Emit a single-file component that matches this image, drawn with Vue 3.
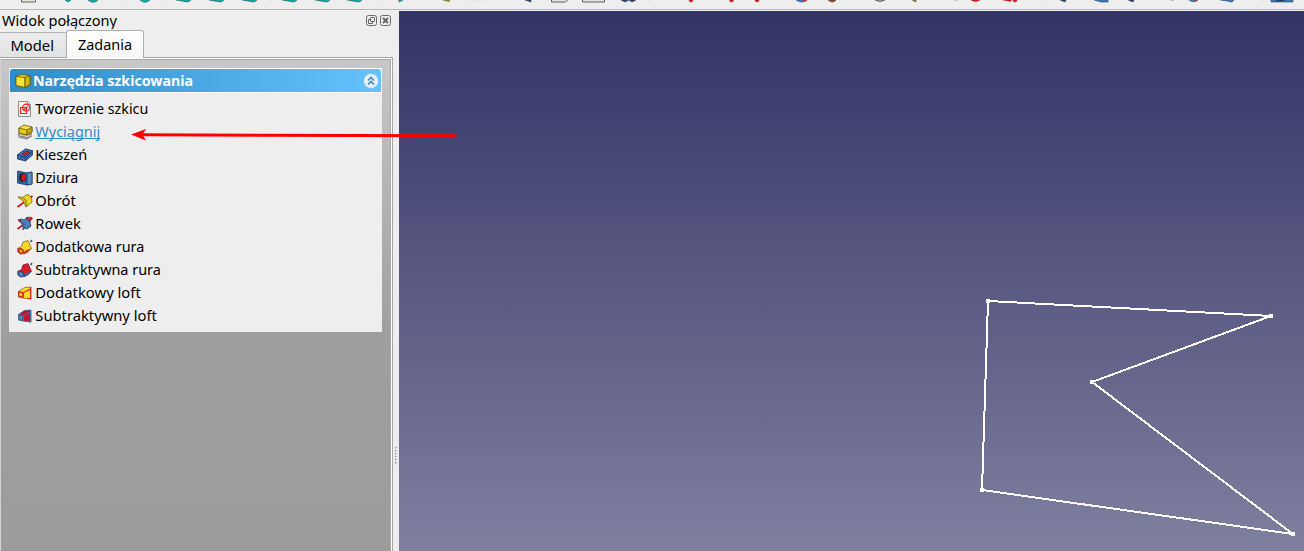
<script setup>
const slabs = [176, 209, 242, 282, 315, 347]
const separators = [125, 166, 271, 377, 648, 1046, 1263]
const tasks = [
  { label: 'Tworzenie szkicu', icon: 'sketch', width: 113 },
  { label: 'Wyciągnij', icon: 'pad', width: 65, active: true },
  { label: 'Kieszeń', icon: 'pocket', width: 52 },
  { label: 'Dziura', icon: 'hole', width: 43 },
  { label: 'Obrót', icon: 'revolve', width: 40.5 },
  { label: 'Rowek', icon: 'groove', width: 45.5 },
  { label: 'Dodatkowa rura', icon: 'addpipe', width: 109 },
  { label: 'Subtraktywna rura', icon: 'subpipe', width: 125.5 },
  { label: 'Dodatkowy loft', icon: 'addloft', width: 105.5 },
  { label: 'Subtraktywny loft', icon: 'subloft', width: 121.5 },
]
const vertices = [[988, 301], [1271, 316], [1092, 382], [1293, 534], [982, 490]]
const outline = vertices.map(([x, y]) => `${x - 399},${y - 11}`).join(' ')
</script>

<template>
  <div class="window">
    <header class="toolbar">
      <svg width="1304" height="9" viewBox="0 0 1304 9">
        <path v-for="x in separators" :key="x" :d="`M${x + .5} 0v1`" stroke="#cfcfcf" />
        <path d="M21.5 0v2h14v-2" fill="#e2e5dc" stroke="#676b65" />
        <g fill="#12a9a9" stroke="#245c5e" stroke-width=".7">
          <path d="M65 0l3 2 3-2M88 0q5 4.500 10 0M140 0q5 4.500 10 0M399 0v2l4-2" />
          <path v-for="x in slabs" :key="x" :d="`M${x} 0l12 2 3-2`" />
        </g>
        <path d="M443 0l6 1.500 1-1.500" fill="#ad9410" stroke="#554b24" stroke-width=".6" />
        <path d="M470 0h17" stroke="#e0e0e0" />
        <g fill="#25416f" stroke="#2c3544" stroke-width=".6">
          <path d="M525 0l6 2v-2M621 0l4 2 4-2 3 2 4-2M1060 0l5 2 1-2M1128 0l5 2 1-2" />
        </g>
        <path d="M551.500 0v2h14l2-2M582.500 0v2h22v-2" fill="#e3e3dc" stroke="#5e625d" />
        <g fill="#d61c1c" stroke="#842424" stroke-width=".5">
          <circle v-for="x in [691, 731.5, 757, 1015]" :key="x" :cx="x" cy="0" r="2" />
          <path d="M971 0q5 3 9 0M954 0h3M1003 0l7 1.500 2-1.500" />
        </g>
        <g fill="#3c78b8" stroke="#263e60" stroke-width=".6">
          <path d="M796 0q6 4 11 0M1094 0l7 2h7v-2M1189 0q5 3.500 9 0M1171 0h3M1220 0l7 1 5 1 2-2" />
          <path d="M1271 0v2h22v-2" />
        </g>
        <path d="M803 0q2 3 4 0M1193 0l4 1v-1" fill="#e22119" />
        <path d="M828 0q5 4 8 0" fill="#8a481c" stroke="#41301f" stroke-width=".6" />
        <path d="M875 0q5 3 10 0" fill="#a7aaaa" stroke="#5b5d5d" />
        <path d="M912 0l4 2v-2" fill="#958327" stroke="#56501e" stroke-width=".6" />
        <path d="M1276 0l3 1 6-1" stroke="#203042" fill="none" />
      </svg>
    </header>

    <main class="workspace">
      <aside class="dock">
        <div class="title">
          <svg class="label" width="118" height="18"><text x="2" y="14.5" textLength="115" lengthAdjust="spacingAndGlyphs">Widok połączony</text></svg>
          <svg class="controls" width="26" height="12" viewBox="0 0 26 12" fill="none" stroke="#686762">
            <rect x=".5" y=".5" width="10" height="10" rx="2" />
            <rect x="4.500" y="2.500" width="4" height="4" rx=".5" />
            <path d="M4.500 4.500h-2v4h4v-2" />
            <rect x="14.500" y=".5" width="10" height="10" rx="2" />
            <path d="M17 3l5 5M22 3l-5 5" stroke-width="2" />
          </svg>
        </div>
        <nav class="tabs">
          <div class="tab"><svg width="66" height="24"><text x="10.500" y="17.5" textLength="43.500" lengthAdjust="spacingAndGlyphs">Model</text></svg></div>
          <div class="tab selected"><svg width="76" height="26"><text x="11" y="18" textLength="54" lengthAdjust="spacingAndGlyphs">Zadania</text></svg></div>
        </nav>
        <div class="pane">
          <section class="group">
            <div class="group-head">
              <svg width="17" height="16" viewBox="0 0 17 16" stroke="#62530d" stroke-width=".8" stroke-linejoin="round">
                <path d="M1 3.500l5-2 9 1v9l-5 3-9-2z" fill="#f0d51b" />
                <path d="M1 3.500l9 1v10l-9-2z" fill="#f8e337" />
                <path d="M10 4.500l5-2v9l-5 3z" fill="#d7b60d" />
              </svg>
              <svg class="heading" width="165" height="22"><text x="1" y="16" textLength="160" lengthAdjust="spacingAndGlyphs">Narzędzia szkicowania</text></svg>
              <svg class="collapse" width="16" height="16" viewBox="0 0 16 16">
                <circle cx="8" cy="8" r="7.200" fill="#eee" />
                <path d="M5 7.500l3-3 3 3M5 11.500l3-3 3 3" fill="none" stroke="#308cc6" stroke-width="1.600" />
              </svg>
            </div>
            <ul>
              <li v-for="task in tasks" :key="task.icon" :class="{ active: task.active }">
                <svg class="icon" width="16" height="16" viewBox="0 0 16 16" stroke-linejoin="round" stroke-width=".8">
                  <g v-if="task.icon === 'sketch'" fill="none">
                    <path d="M1.500.5h9l3 3v12h-12z" fill="#f4f4f4" stroke="#777" />
                    <path d="M10.500.5v3h3" stroke="#777" />
                    <g stroke="#e82028" stroke-width="1.100"><circle cx="9" cy="6.500" r="3.400" /><path d="M3.500 6.500h6v6h-6zM6.500 9.500l4-4" /></g>
                  </g>
                  <g v-else-if="task.icon === 'pad'">
                    <path d="M1 10l3-1 11 1-4 3.500-9-1.500zM1 13l9 2 5-3" fill="#c5c5be" stroke="#686868" />
                    <path d="M2 4l5-3 8 2v5l-5 3-8-2z" fill="#f7e43a" stroke="#68580b" />
                    <path d="M2 4l8 2v5l-8-2z" fill="#e8cd1c" stroke="#68580b" />
                    <path d="M10 6l5-3v5l-5 3z" fill="#c9a80d" stroke="#68580b" />
                  </g>
                  <g v-else-if="task.icon === 'pocket'" stroke="#173662">
                    <path d="M.5 8l8-6 7 2v4l-7 6-8-2z" fill="#3568aa" />
                    <path d="M.5 8l8 2 7-6M8.500 10v4" fill="#4d81bd" />
                    <path d="M.5 8l8-6 7 2-7 6z" fill="#4d81bd" />
                    <path d="M5 7.200l4-3 3.500 1-4 3z" fill="#c82a35" stroke="#4e182b" />
                  </g>
                  <g v-else-if="task.icon === 'hole'" stroke="#193a65">
                    <path d="M.5 1l9.500 2 5-1v12l-5 1-9.500-2z" fill="#3465a4" />
                    <path d="M10 3l5-1v12l-5 1z" fill="#5b8dc3" />
                    <ellipse cx="5.500" cy="7.500" rx="3.200" ry="4.300" fill="#45121d" />
                    <path d="M6 4c4 0 3 6.500 0 7-2-1-2-5 0-7" fill="#e31620" stroke="none" />
                  </g>
                  <g v-else-if="task.icon === 'revolve'">
                    <path d="M.5 14L15.500 3" stroke="#cc1c1c" stroke-width="1.800" />
                    <path d="M1 4l4 1 5-3.500q5 1 5 7.500l-6 5q0-6-8-10" fill="#f0d72b" stroke="#77620f" />
                    <path d="M1 4q5-1 8 3 1 3 0 7-1-6-8-10" fill="#d6b719" stroke="#8d7412" />
                  </g>
                  <g v-else-if="task.icon === 'groove'">
                    <path d="M.5 13L15.500 2" stroke="#cc1c1c" stroke-width="2" />
                    <path d="M1 4l3-1 3 1 3-3 4 2-1 4 1 3-4 3-2-1-2 2q1-6-5-10" fill="#3d6fae" stroke="#213f69" />
                    <path d="M10 2.500l3-1.500 2 1-3 3zM1 4l3 1-2 1" fill="#d82b34" stroke="#90212a" />
                    <path d="M4 4q6 2 6 8M7 4q5 1 5 6" stroke="#719dc7" fill="none" />
                  </g>
                  <g v-else-if="task.icon.endsWith('pipe')">
                    <path d="M6 3l5-1.500 3.500 8L8 14 1 13V9.500l3.500-2z" :fill="task.icon === 'addpipe' ? '#f4d928' : '#d81d28'" :stroke="task.icon === 'addpipe' ? '#8c6915' : '#782023'" />
                    <path d="M1 9l4.500 1L8 14.500l-5 .5-2-2.500z" :fill="task.icon === 'addpipe' ? '#df3925' : '#376aae'" :stroke="task.icon === 'addpipe' ? '#982312' : '#203f67'" />
                    <path d="M8 11.500l6.500-2-3.500 4-3 1z" :fill="task.icon === 'addpipe' ? '#d93822' : '#3d6799'" />
                    <path d="M13.500 3L15 1" fill="none" stroke="#3d5582" stroke-width="1.500" />
                    <path d="M2.500 10.500l2 .5 1 2-2 .5z" :fill="task.icon === 'addpipe' ? '#f2cf20' : '#6da0cc'" />
                  </g>
                  <g v-else>
                    <path d="M1.500 6.500l6-4 6.500-.5v12l-8-1-4.500-1z" :fill="task.icon === 'addloft' ? '#f6dd31' : '#c41525'" :stroke="task.icon === 'addloft' ? '#b65420' : '#31577f'" />
                    <path d="M1.500 6.500l5 1v5l-5-1z" :fill="task.icon === 'addloft' ? '#e94a2b' : '#3768a5'" :stroke="task.icon === 'addloft' ? '#b52318' : '#3c72aa'" />
                    <path d="M6.500 7.500L13.500 4M13.500 2v12l-3-1" fill="none" :stroke="task.icon === 'addloft' ? '#e4272c' : '#426f9d'" stroke-width="1.100" />
                    <path d="M2.500 8l2.500.5v2.500l-2.500-.5z" :fill="task.icon === 'addloft' ? '#ffe148' : '#5f8db8'" />
                  </g>
                </svg>
                <svg class="label" :width="task.width + 4" height="23"><text x="1.300" y="17" :textLength="task.width" lengthAdjust="spacingAndGlyphs">{{ task.label }}</text><path v-if="task.active" d="M1 18.500h65" stroke="#308cc6" /></svg>
              </li>
            </ul>
          </section>
        </div>
      </aside>
      <div class="splitter"><i v-for="n in 6" :key="n"></i></div>
      <div class="view">
        <svg width="905" height="540" viewBox="0 0 905 540" shape-rendering="crispEdges">
          <polygon :points="outline" fill="none" stroke="#fff" stroke-width="2" />
          <rect v-for="[x, y] in vertices" :key="x" :x="x - 401" :y="y - 13" width="4" height="4" fill="#fff" />
        </svg>
      </div>
    </main>
    <svg class="arrow" width="328" height="14" viewBox="0 0 328 14">
      <path d="M10 6.800L325.500 7.800" stroke="#f00" stroke-width="3" />
      <path d="M0 6.500L15 1l-3.500 5.600L15 12.500z" fill="#f00" />
    </svg>
  </div>
</template>

<style>
body { overflow: hidden; }
</style>

<style scoped>
* { box-sizing: border-box; }
svg { display: block; flex: none; }
.window { width: 1304px; height: 551px; background: #eee; position: relative; display: flex; flex-direction: column; font-family: "Noto Sans", sans-serif; font-size: 14.4px; color: #000; overflow: hidden; }
.toolbar { height: 11px; flex: none; background: linear-gradient(#eee 0 9px, #b5b5b5 9px 10px, #f2f2f2 10px); }
.workspace { height: 540px; display: flex; }
.dock { width: 393px; display: flex; flex-direction: column; }
.title { height: 19px; flex: none; display: flex; justify-content: space-between; }
.controls { margin: 4px 1px 0 0; }
.tabs { height: 27px; flex: none; display: flex; align-items: flex-end; }
.tab { width: 66px; height: 25px; border-top: 1px solid #b5b5b5; background: linear-gradient(#ebebeb, #e2e2e2); }
.selected { width: 78px; height: 28px; margin-bottom: -1px; padding-top: 1px; border: 1px solid #adadad; border-bottom: 0; border-radius: 3px 3px 0 0; background: linear-gradient(#fff, #f7f7f7); position: relative; z-index: 1; }
.pane { flex: 1; border-top: 1px solid #a5a5a5; border-right: 1px solid #a5a5a5; padding: 10px 9px 0 8px; background: linear-gradient(#c8c8c8, #9e9e9e 280px, #9c9c9c); box-shadow: inset 0 1px #fff, inset -1px 0 #fff, inset 1px 0 #d2d2d2, inset 0 2px #aaa, inset -2px 0 #aaa; }
.group { width: 373px; height: 264px; margin-left: 1px; background: #eee; }
.group-head { height: 25px; border: 1px solid #fff; border-left-color: #d9e5ed; border-radius: 4px 4px 0 0; background: linear-gradient(90deg, #308cc6, #66c2ff); display: flex; align-items: center; padding-left: 5px; }
.heading { color: #fff; font-weight: 700; }
.collapse { margin-left: auto; margin-right: 2px; }
.group ul { margin: 0; padding: 4px 0 0 8px; list-style: none; }
.group li { height: 23px; display: flex; align-items: center; gap: 1px; }
.active { color: #308cc6; }
text { fill: currentColor; }
.splitter { width: 6px; display: flex; flex-direction: column; align-items: center; gap: 1px; padding-top: 436px; background: #eee; }
.splitter i { width: 2px; height: 2px; flex: none; border-top: 1px solid #aaa; border-left: 1px solid #aaa; background: #fff; }
.view { width: 905px; background: linear-gradient(#333366, #7f7f9f); }
.arrow { position: absolute; left: 131px; top: 127.500px; }
</style>
